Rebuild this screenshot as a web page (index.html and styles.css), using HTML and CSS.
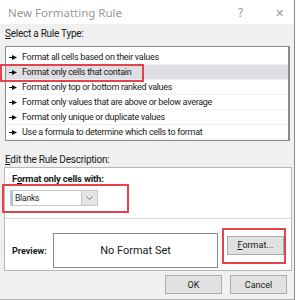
FILE: index.html
```html
<!DOCTYPE html>
<html lang="en">
<head>
    <meta charset="UTF-8">
    <title>New Formatting Rule</title>
    <link rel="stylesheet" href="styles.css">
</head>
<body>
    <div class="dialog">
        <div class="titlebar">
            <span class="title">New Formatting Rule</span>
            <span class="help">?</span>
            <span class="close">&#x2715;</span>
        </div>
        <div class="content">
            <div class="label"><u>S</u>elect a Rule Type:</div>
            <ul class="rule-list">
                <li><svg class="arrow" width="8" height="5" viewBox="0 0 8 5"><path d="M0 2.5 H4" stroke="#111" stroke-width="1"/><path d="M3 0 L8 2.5 L3 5 Z" fill="#111"/></svg>Format all cells based on their values</li>
                <li class="selected"><svg class="arrow" width="8" height="5" viewBox="0 0 8 5"><path d="M0 2.5 H4" stroke="#111" stroke-width="1"/><path d="M3 0 L8 2.5 L3 5 Z" fill="#111"/></svg>Format only cells that contain</li>
                <li><svg class="arrow" width="8" height="5" viewBox="0 0 8 5"><path d="M0 2.5 H4" stroke="#111" stroke-width="1"/><path d="M3 0 L8 2.5 L3 5 Z" fill="#111"/></svg>Format only top or bottom ranked values</li>
                <li><svg class="arrow" width="8" height="5" viewBox="0 0 8 5"><path d="M0 2.5 H4" stroke="#111" stroke-width="1"/><path d="M3 0 L8 2.5 L3 5 Z" fill="#111"/></svg>Format only values that are above or below average</li>
                <li><svg class="arrow" width="8" height="5" viewBox="0 0 8 5"><path d="M0 2.5 H4" stroke="#111" stroke-width="1"/><path d="M3 0 L8 2.5 L3 5 Z" fill="#111"/></svg>Format only unique or duplicate values</li>
                <li><svg class="arrow" width="8" height="5" viewBox="0 0 8 5"><path d="M0 2.5 H4" stroke="#111" stroke-width="1"/><path d="M3 0 L8 2.5 L3 5 Z" fill="#111"/></svg>Use a formula to determine which cells to format</li>
            </ul>
            <div class="label desc-label"><u>E</u>dit the Rule Description:</div>
            <div class="desc-box">
                <div class="desc-top">
                    <div class="desc-title">F<u>o</u>rmat only cells with:</div>
                    <div class="select">
                        <span class="select-value">Blanks</span>
                        <span class="select-btn">
                            <svg width="7" height="4" viewBox="0 0 7 4"><path d="M0.5 0.5 L3.5 3.5 L6.5 0.5" fill="none" stroke="#777" stroke-width="1"/></svg>
                        </span>
                    </div>
                </div>
                <div class="preview-row">
                    <span class="preview-label">Preview:</span>
                    <div class="preview-box">No Format Set</div>
                    <button class="btn format-btn"><u>F</u>ormat...</button>
                </div>
            </div>
            <div class="footer">
                <button class="btn">OK</button>
                <button class="btn">Cancel</button>
            </div>
        </div>

        <!-- annotation boxes -->
        <div class="mark mark-rule"></div>
        <div class="mark mark-select"></div>
        <div class="mark mark-format"></div>
    </div>
</body>
</html>
```

FILE: styles.css
```css
body {
    margin: 0;
    padding: 0;
    background-color: #fff;
    font-family: Roboto, 'Noto Sans', sans-serif;
    font-size: 9px;
    color: #1a1a1a;
}
.dialog {
    position: relative;
    width: 294px;
    height: 299px;
    background-color: #f0f0f0;
    border-right: 1px solid #8a8a8a;
    border-bottom: 1px solid #b0b0b0;
    overflow: hidden;
}
.titlebar {
    height: 24px;
    background-color: #fff;
    display: flex;
    align-items: center;
    color: #999;
    font-family: 'Noto Sans', sans-serif;
}
.title {
    flex: 1;
    padding-left: 8px;
    font-size: 11.5px;
}
.help {
    width: 37px;
    font-size: 12px;
}
.close {
    width: 19px;
    font-size: 11px;
}
.content {
    padding: 3px 4px 0 5px;
}
.label {
    height: 14px;
    line-height: 14px;
    font-size: 10px;
    letter-spacing: -0.25px;
}
.rule-list {
    list-style: none;
    margin: 5px 0 0 0;
    padding: 3px 0 0 0;
    height: 89px;
    background-color: #fff;
    border: 1px solid #8a8a8a;
    border-right-width: 2px;
    border-bottom-width: 2px;
}
.rule-list li {
    height: 15px;
    line-height: 15px;
    padding-left: 3px;
    border-bottom: 1px solid #f2f2f2;
    box-sizing: border-box;
    white-space: nowrap;
    font-size: 9px;
    letter-spacing: -0.3px;
}
.rule-list li.selected {
    background-color: #dedee3;
}
.arrow {
    margin: 0 5px 0 0;
    vertical-align: 0;
}
.desc-label {
    margin-top: 12px;
}
.desc-box {
    margin-left: -1px;
    width: 286px;
    height: 102px;
    background-color: #fff;
    border: 1px solid #b8b8b8;
}
.desc-top {
    height: 51px;
    padding: 4px 0 0 7px;
    box-sizing: border-box;
    border-bottom: 1px solid #d8d8d8;
}
.desc-title {
    font-weight: bold;
    height: 14px;
    line-height: 14px;
    font-size: 9.5px;
    letter-spacing: -0.2px;
}
.select {
    display: flex;
    width: 88px;
    height: 16px;
    margin-top: 4px;
    margin-left: -2px;
    border: 1px solid #c8c8c8;
    box-sizing: border-box;
}
.select-value {
    flex: 1;
    line-height: 14px;
    padding-left: 2px;
    border-left: 2px solid #a9c4e8;
    font-size: 8.5px;
    letter-spacing: -0.2px;
}
.select-btn {
    width: 15px;
    background-color: #e4e4e4;
    border-left: 1px solid #c8c8c8;
    display: flex;
    align-items: center;
    justify-content: center;
}
.preview-row {
    display: flex;
    align-items: center;
    height: 50px;
    padding-left: 7px;
}
.preview-label {
    width: 41px;
    font-weight: bold;
    padding-top: 13px;
    font-size: 9px;
}
.preview-box {
    width: 163px;
    height: 33px;
    margin-top: 13px;
    border: 1px solid #8a8a8a;
    display: flex;
    align-items: center;
    justify-content: center;
    font-size: 11px;
}
.btn {
    height: 19px;
    padding: 0;
    background-color: #e1e1e1;
    border: 1px solid #adadad;
    font-family: inherit;
    font-size: 9px;
    color: #1a1a1a;
}
.format-btn {
    width: 57px;
    margin-left: 9px;
    margin-top: 2px;
}
.footer {
    display: flex;
    justify-content: flex-end;
    gap: 8px;
    padding-top: 4px;
    padding-right: 3px;
}
.footer .btn {
    width: 57px;
}
.mark {
    position: absolute;
    border: 2px solid #e4424d;
    box-sizing: border-box;
}
.mark-rule {
    left: 0;
    top: 64px;
    width: 144px;
    height: 18px;
}
.mark-select {
    left: 2px;
    top: 184px;
    width: 127px;
    height: 29px;
}
.mark-format {
    left: 222px;
    top: 228px;
    width: 64px;
    height: 36px;
}
```
